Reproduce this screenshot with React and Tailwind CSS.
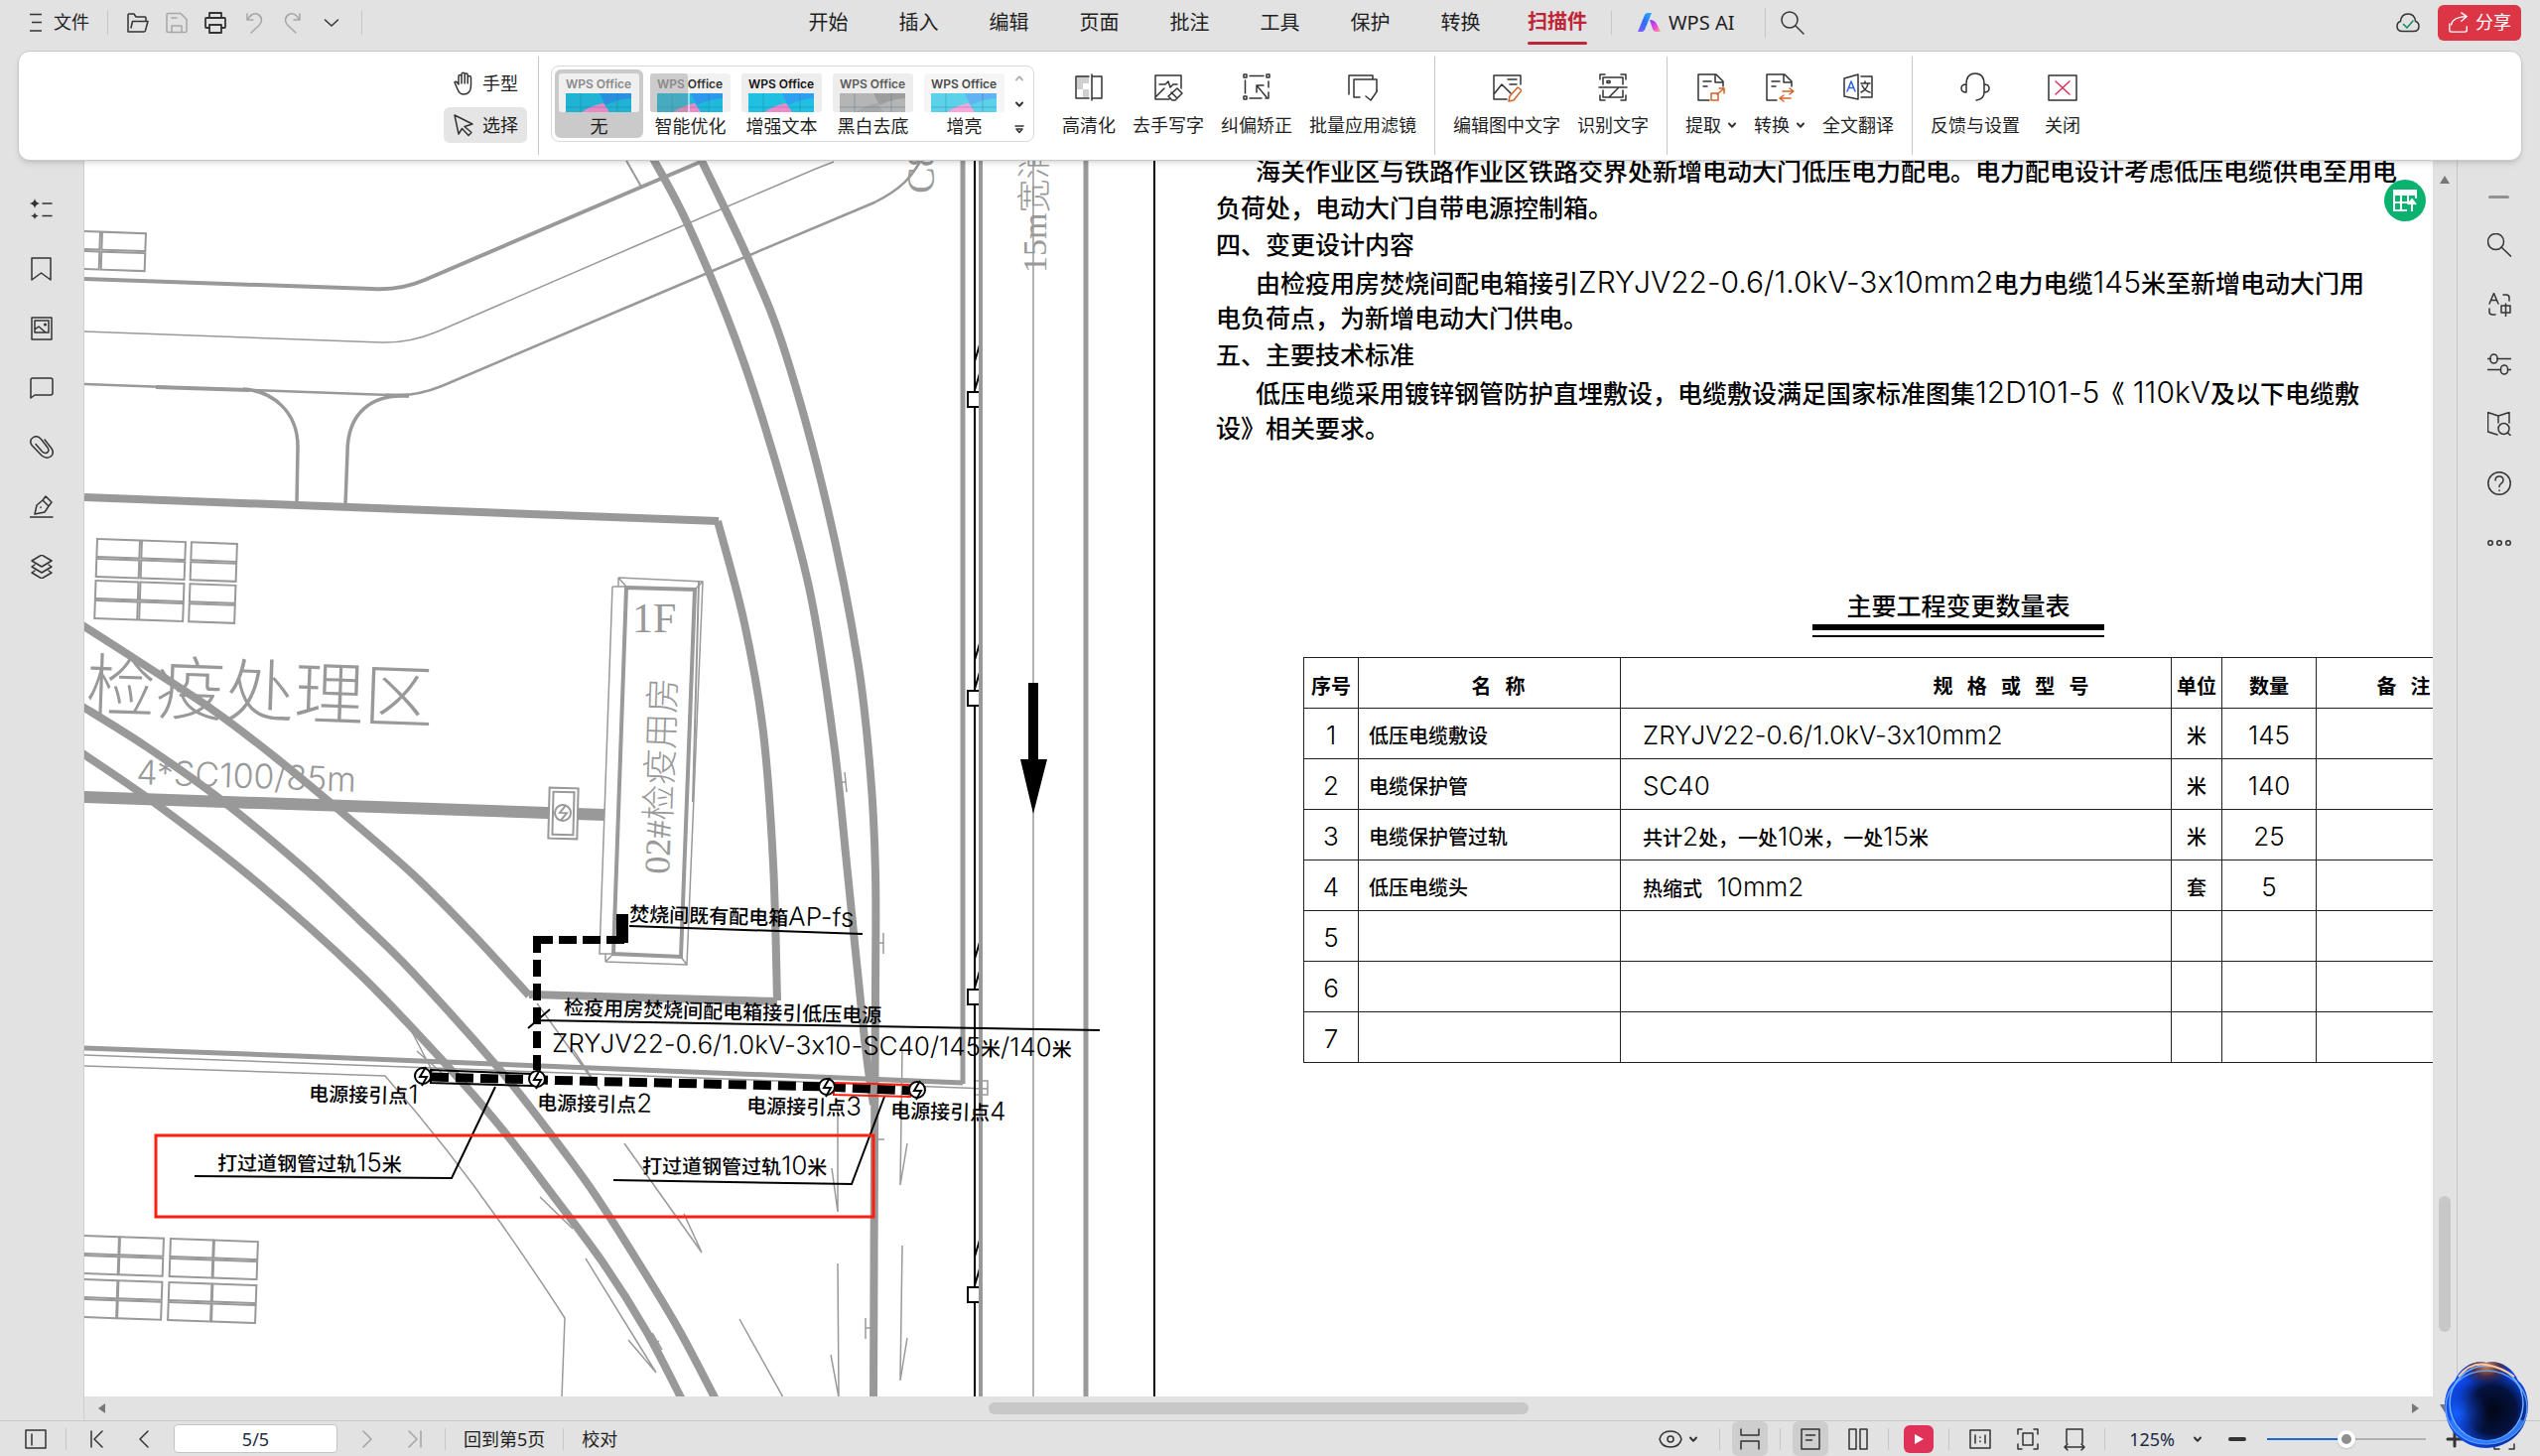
import React, { useState } from "react";

const tabs = ["开始", "插入", "编辑", "页面", "批注", "工具", "保护", "转换"];

const GREY = "#999999";

const Icon = ({ size = 24, box = 24, width = 1.5, color = "#333333", className = "", children }) => (
  <svg
    width={size}
    height={size}
    viewBox={`0 0 ${box} ${box}`}
    fill="none"
    stroke={color}
    strokeWidth={width}
    strokeLinecap="round"
    strokeLinejoin="round"
    className={`shrink-0 ${className}`}
    aria-hidden="true">
    {children}
  </svg>
);

const SmallChevron = ({ color = "#333333" }) => (
  <Icon size={10} box={10} width={2} color={color}>
    <path d="M2 3.5 5 6.8 8 3.5" />
  </Icon>
);

const Divider = ({ className = "" }) => <div className={`w-px shrink-0 bg-[#c6c6c6] ${className}`} />;

const SearchIcon = () => (
  <Icon>
    <circle cx="9" cy="9" r="8" />
    <path d="m15 15 8 8" />
  </Icon>
);

/* ---------- title bar ---------- */

const TopBar = ({ tab, setTab }) => (
  <header className="flex h-[51px] shrink-0 items-start">
    <div className="flex h-[45px] w-[789px] shrink-0 items-center pl-[24px]">
      <button type="button" className="flex items-center gap-[6px] text-[18px]">
        <Icon>
          <path d="M6 3.5h12M8 11.5h10M6 20h12" strokeLinecap="butt" />
        </Icon>
        文件
      </button>
      <Divider className="ml-[18px] h-[25px]" />
      <button type="button" aria-label="打开" className="ml-[18px]">
        <Icon>
          <path d="M2 21V4q0-1 1-1h5l2 3h9q1 0 1 1v3M2 21h16q1 0 1.400-1L22 10.500H6.500L5 17" />
        </Icon>
      </button>
      <button type="button" aria-label="保存" className="ml-[15px]">
        <Icon color="#a6a6a6">
          <path d="M2 21V4q0-1.500 1.500-1.500H16l6 6V20q0 1.500-1.500 1.500h-17Q2 21.500 2 20M7 21v-6h10v6M7 7h5" />
        </Icon>
      </button>
      <button type="button" aria-label="打印" className="ml-[15px]">
        <Icon width={1.8}>
          <path d="M6 7V2h12v5M6 17H3q-1 0-1-1V8q0-1 1-1h18q1 0 1 1v8q0 1-1 1h-3" />
          <path d="M6 14h12v8H6z" />
        </Icon>
      </button>
      <button type="button" aria-label="撤销" className="ml-[15px]">
        <Icon color="#a6a6a6">
          <path d="M5 3v6h6M5.500 8.500C9 3 13 2 16 3.500c5 3 4 8 1 11L9 22" />
        </Icon>
      </button>
      <button type="button" aria-label="重做" className="ml-[15px]">
        <Icon color="#a6a6a6">
          <path d="M19 3v6h-6M18.500 8.500C15 3 11 2 8 3.500c-5 3-4 8-1 11L15 22" />
        </Icon>
      </button>
      <button type="button" aria-label="更多" className="ml-[15px]">
        <Icon>
          <path d="m5.500 9 6.500 6 6.500-6" />
        </Icon>
      </button>
      <Divider className="ml-[18px] h-[25px]" />
    </div>

    <nav className="flex h-[45px] items-center text-[20px]">
      {tabs.map((name) => (
        <button key={name} type="button" className="w-[91px] shrink-0 text-center" onClick={() => setTab(name)}>
          {name}
        </button>
      ))}
      <button
        type="button"
        onClick={() => setTab("扫描件")}
        className="ml-[22px] flex h-[45px] shrink-0 flex-col justify-between font-bold text-[#bf2536]">
        <span className="pt-[7px]">扫描件</span>
        <span className={`h-[3px] w-full rounded-full ${tab === "扫描件" ? "bg-[#bf2536]" : ""}`} />
      </button>
      <Divider className="ml-[24px] h-[24px]" />
      <button type="button" className="ml-[25px] flex items-center gap-[8px] whitespace-nowrap">
        <svg width="24" height="20" viewBox="0 0 24 20" aria-hidden="true">
          <defs>
            <linearGradient id="aiBlue" x1="0" y1="1" x2="1" y2="0">
              <stop offset="0" stopColor="#8b5cff" />
              <stop offset="0.5" stopColor="#2f6bff" />
              <stop offset="1" stopColor="#21b7ff" />
            </linearGradient>
            <linearGradient id="aiPink" x1="0" y1="0" x2="1" y2="1">
              <stop offset="0" stopColor="#7a3cff" />
              <stop offset="0.6" stopColor="#f04bd8" />
              <stop offset="1" stopColor="#ffb27a" />
            </linearGradient>
          </defs>
          <path d="M8 2q1-2 3-2h4L8 17q-1 2-3 2H1z" fill="url(#aiBlue)" />
          <path d="M13 7q5 0 7 4l4 8h-4q-3 0-4-3z" fill="url(#aiPink)" />
        </svg>
        WPS AI
      </button>
      <Divider className="ml-[31px] h-[30px]" />
      <button type="button" aria-label="搜索" className="ml-[15px]">
        <SearchIcon />
      </button>
    </nav>

    <div className="ml-auto flex h-[45px] items-center gap-[18px] pr-[19px]">
      <button type="button" aria-label="已同步">
        <Icon>
          <path d="M6.500 20.500C2.500 20.500 1 18 1 15.500c0-3 1.500-4.500 3.500-5C5 5.500 8 3 12 3s7 2.500 7.500 7.500c2 .5 3.500 2 3.500 5 0 2.500-1.500 5-5.500 5z" />
          <path d="m7.500 13.500 3.500 3.500 6-7" stroke="#128a5b" />
        </Icon>
      </button>
      <button
        type="button"
        className="flex h-[36px] w-[84px] items-center justify-center gap-[6px] rounded-md bg-[#dc3545] text-[18px] text-white">
        <Icon size={22} color="#ffffff">
          <path d="M2 13v7q0 2 2 2h15q2 0 2-2v-4M4 14q1-8 16-9M15 1l6 4-6 5" />
        </Icon>
        分享
      </button>
    </div>
  </header>
);

/* ---------- ribbon ---------- */

const filters = [
  { name: "无", ink: "#8a8a8a", bg: "#efefef", base: "#1fb3d4", wedge: "#2b8fe0", pink: "#e889c4" },
  { name: "智能优化", ink: "#333333", bg: "#f1f1f1", base: "#1fb9dc", wedge: "#2f97ec", pink: "#ee8ac9", half: true },
  { name: "增强文本", ink: "#111111", bg: "#ededed", base: "#1fc0e2", wedge: "#2f9ff0", pink: "#f08acb" },
  { name: "黑白去底", ink: "#5a5a5a", bg: "#ededed", base: "#b5b5b5", wedge: "#9d9d9d", pink: "#a8a8a8" },
  { name: "增亮", ink: "#4a4a4a", bg: "#f5f5f5", base: "#5cd1ea", wedge: "#62b2f4", pink: "#fba6dc" },
];

const Thumb = ({ ink, bg, base, wedge, pink, half }) => (
  <svg width="81" height="39" viewBox="0 0 81 39" aria-hidden="true">
    <rect width="81" height="39" rx="3" fill={bg} />
    {half && <rect width="38" height="39" rx="3" fill="#cccccc" />}
    <text x="7" y="15" fontSize="12" fontWeight="600" fontFamily="Inter, sans-serif" fill={ink}>
      {half ?
        <>
          <tspan fill="#8a8a8a">WPS </tspan>Office
        </>
      : "WPS Office"}
    </text>
    <rect x="7" y="20" width="66" height="19" fill={base} />
    <path d="M41 20h32v5q-14 1-26 7z" fill={wedge} />
    <path d="M23 39q10-7 22-9l6 9z" fill={pink} />
    <path d="M7 34h66M22 20v19M59 20v19" stroke="#2b6f84" strokeOpacity="0.35" />
    {half && <path d="M7 20h31v19H7z" fill="#8f8f8f" fillOpacity="0.35" />}
    {half && <path d="M39 20v19" stroke="#ffffff" />}
  </svg>
);

const toolGroups = [
  [
    {
      name: "高清化",
      art: (
        <>
          <path d="M3 3h12v8H9v6H3zM9 17h6v8H9z" fill="#cfcfcf" stroke="none" />
          <path d="M15 4H2v22h13M18 4h10v22H18M18 2v26" />
        </>
      ),
    },
    {
      name: "去手写字",
      art: (
        <path d="M16 27H2V3h26v13M6 12h6l3-3 2 6 3-3h4M2 25l9-9M24 16l5 5-7 7h-3l-4-4zM18 20l6 6" />
      ),
    },
    {
      name: "纠偏矫正",
      art: (
        <>
          <path d="M2 2h3v3H2zM25 2h3v3h-3zM2 24h3v3H2zM8 3.500h14M3.500 8v13M8 26h12M27 9v6M27 20v6h-3" />
          <path d="M15 13l10 12M15 20v-7h7" />
        </>
      ),
    },
    {
      name: "批量应用滤镜",
      art: <path d="M1 22V3h24v3M12 25H6V7h23v12M18 24l5 4 7-10" />,
    },
  ],
  [
    {
      name: "编辑图中文字",
      art: (
        <>
          <path d="M15 27H2V3h27v9M16 7h9M18 12h7M2 22l8-10 9 9" />
          <path d="M26 15l4 3-8 10-5 1 1-5z" stroke="#d4642a" />
        </>
      ),
    },
    {
      name: "识别文字",
      art: (
        <path d="M2 7V2h5M23 2h5v5M2 23v5h5M23 28h5v-5M1 15h28M5 12V5h20v7M5 18v7h20v-7M20 16l-9 9M9 8.500h3v2H9z" />
      ),
    },
  ],
  [
    {
      name: "提取",
      menu: true,
      art: (
        <>
          <path d="M13 28H2V2h18l7 7v5M19 2v8h8M7 9h8M7 14h4" />
          <path d="M15 21h7v7h-7zM21 22l7-6M23 16h5v5" stroke="#d4642a" />
        </>
      ),
    },
    {
      name: "转换",
      menu: true,
      art: (
        <>
          <path d="M12 28H2V2h18l7 7v5M19 2v8h8M7 9h8M7 14h4" />
          <path d="M18 19h11l-4-3M29 19l-4 3M26 26H15l4-3M15 26l4 3" stroke="#d4642a" />
        </>
      ),
    },
    {
      name: "全文翻译",
      art: (
        <>
          <path d="M1 6 15 2v25L1 24zM18 4h11v21H18" />
          <path d="M4 19 8 9l4 10M5.500 15.500h5" stroke="#2f62e0" />
          <path d="M18 11h9M22 9v2M25 11q-1 6-7 9M19 13q3 6 8 7" />
        </>
      ),
    },
  ],
  [
    {
      name: "反馈与设置",
      art: (
        <path d="M6 12v8q-5 0-5-4t5-4q0-11 9-11t9 11v8q5 0 5-4t-5-4M24 20q0 7-8 8" />
      ),
    },
    {
      name: "关闭",
      art: (
        <>
          <path d="M1 3h28v25H1z" />
          <path d="m8 9 14 13M22 9 8 22" stroke="#d8325a" />
        </>
      ),
    },
  ],
];

const Ribbon = () => {
  const [filter, setFilter] = useState("无");
  return (
    <section className="relative z-10 mx-[18px] flex h-[111px] shrink-0 rounded-xl border border-[#c9c9c9] bg-white pl-[428px] text-[18px] leading-[24px] shadow-md">
      <div className="flex w-[84px] shrink-0 flex-col gap-[6px] pt-[13px]">
        <button type="button" className="flex h-[37px] items-center gap-[6px] rounded-md pl-[9px]">
          <Icon>
            <path d="M6 13V5q0-1.500 1.500-1.500T9 5v7-9q0-1.800 1.600-1.800T12.200 3v9V3.500q0-1.500 1.500-1.500t1.500 1.500V12 6q0-1.500 1.600-1.500T18.500 6v8q0 9-7.500 9-4 0-6-5L2 11q1.500-2 4 2z" />
          </Icon>
          手型
        </button>
        <button type="button" className="flex h-[36px] items-center gap-[6px] rounded-md bg-[#e5e5e5] pl-[9px]">
          <Icon>
            <path d="m2 2 18 9-8 2.500 7 6-3 3-6.500-7L6 21z" />
          </Icon>
          选择
        </button>
      </div>
      <Divider className="ml-[11px] mt-[5px] h-[99px]" />

      <div className="ml-[12px] mt-[14px] flex h-[77px] shrink-0 rounded-lg border border-[#d9d9d9] p-[3px]">
        <div className="flex gap-[3px]">
          {filters.map((f) => (
            <button
              key={f.name}
              type="button"
              onClick={() => setFilter(f.name)}
              className={`flex h-[69px] w-[89px] flex-col items-center rounded-md pt-[4px] ${filter === f.name ? "bg-[#cacaca]" : ""}`}>
              <Thumb {...f} />
              <span className="mt-[2px]">{f.name}</span>
            </button>
          ))}
        </div>
        <div className="flex w-[22px] flex-col items-center justify-between py-[4px]">
          <button type="button" aria-label="上一行">
            <Icon size={10} box={10} width={2} color="#b5b5b5">
              <path d="M2 6.500 5 3.200 8 6.500" />
            </Icon>
          </button>
          <button type="button" aria-label="下一行">
            <SmallChevron />
          </button>
          <button type="button" aria-label="展开">
            <Icon size={10} box={10} width={1.5}>
              <path d="M1 2h8M2 5l3 3.500L8 5z" />
            </Icon>
          </button>
        </div>
      </div>

      <div className="ml-[28px] flex gap-[17px] pt-[21px]">
        {toolGroups.map((group, i) => (
          <React.Fragment key={group[0].name}>
            {i > 0 && <Divider className="mx-px -mt-[16px] h-[99px]" />}
            {group.map((tool) => (
              <button
                key={tool.name}
                type="button"
                className="flex h-[66px] shrink-0 flex-col items-center gap-[11px] whitespace-nowrap last:ml-2">
                <Icon size={30} box={30}>
                  {tool.art}
                </Icon>
                <span className="flex items-center gap-[6px]">
                  {tool.name}
                  {tool.menu && <SmallChevron />}
                </span>
              </button>
            ))}
          </React.Fragment>
        ))}
      </div>
    </section>
  );
};

/* ---------- side bars ---------- */

const leftTools = [
  {
    name: "智能目录",
    art: (
      <>
        <path d="M5 1q.6 4 5 5-4.400 1-5 5-.6-4-5-5 4.400-1 5-5zM5 15q.5 3 4 3.500Q5.500 19 5 22q-.5-3-4-3.500Q4.500 18 5 15z" fill="#333333" stroke="none" />
        <path d="M13 6h9M13 18.500h9" />
      </>
    ),
  },
  { name: "书签", art: <path d="M2 1h19v22l-9.500-7L2 23z" /> },
  {
    name: "缩略图",
    art: (
      <>
        <path d="M2 1h20v22H2z" />
        <path d="M5 4h14v12H5zM5 13l4-3 7 6" />
        <circle cx="15.500" cy="8" r="0.800" />
      </>
    ),
  },
  { name: "批注", art: <path d="M3 2h18q2 0 2 2v13q0 2-2 2H5l-4 3V4q0-2 2-2z" /> },
  {
    name: "附件",
    art: <path d="m15 4 7 9q3 5-1 8t-9-1L2 9.500Q-1 5 3 2t8 1l7 9q2 3.500-.5 5t-5-1L6 8.500" />,
  },
  {
    name: "签名",
    art: <path d="M0 22h23M5 19l2-9 6-5 6 6-4 6zM13 5l3-4 6 6-3 4M11 12v.5" />,
  },
  {
    name: "图层",
    art: <path d="m12 0 10 6-10 6L2 6zM5 10l-3 2 10 6 10-6-3-2M5 16l-3 2 10 6 10-6-3-2" />,
  },
];

const rightTools = [
  {
    name: "查找",
    art: (
      <>
        <circle cx="8.500" cy="8.500" r="8" />
        <path d="m14 14 10 9.500" />
      </>
    ),
  },
  {
    name: "翻译",
    art: <path d="M2 11 6.500.500 11 11M3.500 7.500h6M16 2h3q3 0 3 3v3M2 16v3q0 3 3 3h3M14 13h9v7h-9zM18.500 11v13" />,
  },
  {
    name: "调整",
    art: (
      <>
        <path d="M0 6.500h3M10 6.500h14M0 17.500h13M21 17.500h3" />
        <rect x="3" y="2" width="7" height="9" rx="3.500" />
        <rect x="13.500" y="13" width="7" height="9" rx="3.500" />
      </>
    ),
  },
  {
    name: "查阅",
    art: (
      <>
        <path d="M10 23 .500 20V.500L11 4l11-3.500V11M11 4v7" />
        <circle cx="16.500" cy="17" r="5.500" />
        <path d="m20.500 21 3 3" />
      </>
    ),
  },
  {
    name: "帮助",
    art: (
      <>
        <circle cx="12" cy="12" r="11.200" />
        <path d="M8 9q0-4 4-4t4 4q0 2-2.500 3.500-1.500 1-1.500 3M12 19v.5" />
      </>
    ),
  },
  {
    name: "更多",
    art: (
      <>
        <circle cx="3" cy="12" r="2.300" />
        <circle cx="12" cy="12" r="2.300" />
        <circle cx="21" cy="12" r="2.300" />
      </>
    ),
  },
];

const SideButtons = ({ tools }) =>
  tools.map((tool) => (
    <button key={tool.name} type="button" aria-label={tool.name} className="flex h-[60px] items-center justify-center">
      <Icon>{tool.art}</Icon>
    </button>
  ));

/* ---------- site plan ---------- */

// Catmull-Rom through the points, as one path
const smooth = (pts) => {
  let d = `M${pts[0][0]} ${pts[0][1]}`;
  for (let i = 0; i < pts.length - 1; i++) {
    const p0 = pts[i - 1] || pts[i];
    const p1 = pts[i];
    const p2 = pts[i + 1];
    const p3 = pts[i + 2] || p2;
    d += ` C${p1[0] + (p2[0] - p0[0]) / 6} ${p1[1] + (p2[1] - p0[1]) / 6} ${p2[0] - (p3[0] - p1[0]) / 6} ${p2[1] - (p3[1] - p1[1]) / 6} ${p2[0]} ${p2[1]}`;
  }
  return d;
};

const rails = [
  [[80, 628], [147, 671], [214, 715], [276, 762], [339, 814], [415, 880], [476, 941], [533, 1003]],
  [[80, 710], [147, 752], [223, 806], [303, 872], [362, 927], [415, 979], [503, 1077], [552, 1139], [597, 1200], [640, 1267], [683, 1338], [721, 1410]],
  [[80, 757], [160, 812], [259, 889], [361, 980], [448, 1071], [503, 1134], [553, 1199], [608, 1273], [651, 1341], [687, 1410]],
  [[657, 158], [692, 224], [740, 339], [778, 454], [816, 596], [840, 748], [854, 880], [871, 1047], [880, 1113]],
  [[705, 158], [754, 261], [791, 355], [833, 509], [864, 665], [877, 780], [882, 880], [882, 1000], [881, 1160], [880, 1412]],
  [[723, 525], [750, 628], [769, 738], [779, 870], [783, 1008]],
];

const thinLines = [
  "M420 1059 445 1081M410 1030 436 1080M541 1011 604 1098M577 1057 597 1087",
  "M629 1152 707 1262 689 1223M544 1206 577 1238M590 1268 661 1383 633 1350",
  "M657 1343 667 1360M661 1354 664 1351M745 1329 789 1408M844 1273 845 1408 837 1365",
  "M909 1255 907 1391 914 1348M872 1328V1349M872 1338H880M844 1113V1221L838 1177",
  "M909 1058 907 1194 914 1152M890 940V961M883 950H890M880 1148H891M851 778 853 798M847 788H852",
];

const Cells = ({ x, y, cols, rows }) => (
  <g transform={`rotate(2 ${x} ${y})`} strokeWidth="2">
    {rows.map((ry) => cols.map(([cx, w]) => <rect key={`${cx}-${ry}`} x={cx} y={ry} width={w} height="18" />))}
  </g>
);

const Mixed = ({ children, size }) =>
  children.split(/([\x20-\x7e]+)/).map((part, i) =>
    i % 2 ?
      <tspan key={i} fontSize={size} fontWeight="300">
        {part}
      </tspan>
    : part
  );

const Label = ({ x, y, turn = 1.5, children }) => (
  <text x={x} y={y} transform={`rotate(${turn} ${x} ${y})`} fontSize="20" fontWeight="500" fill="#000000" stroke="none">
    <Mixed size={26}>{children}</Mixed>
  </text>
);

const Node = ({ x, y }) => (
  <g stroke="#000000" strokeWidth="2" fill="#ffffff">
    <circle cx={x} cy={y} r="8" />
    <path d={`M${x + 3} ${y - 9}l-6 10h7l-5 9`} fill="none" />
  </g>
);

const SitePlan = () => (
  <svg
    width="1077"
    height="1246"
    viewBox="85 162 1077 1246"
    className="shrink-0 [font-feature-settings:'calt'_0]"
    fill="none"
    stroke={GREY}
    fontFamily="Inter, 'Noto Sans CJK SC', sans-serif">
    {/* roads */}
    <path d="M85 281 375 291Q402 293 428 282L640 191 706 163" strokeWidth="4" />
    <path d="M85 334 384 345Q412 346 441 334L640 248 733 208 822 170 840 163" strokeWidth="1.500" />
    <path d="M85 387 392 398Q418 400 445 389L640 306 753 258 881 204C909 190 918 178 927 163" strokeWidth="2.500" />
    <path d="M157 390 251 393M388 398.500H412" strokeWidth="4" />
    <path d="M245 392C275 394 300 415 300 450L299 507M412 399C375 397 350 415 350 456L348 508" strokeWidth="3.500" />
    <path d="M630 160 646 188" strokeWidth="2" />
    <path d="M85 501 724 525" strokeWidth="8" />

    <Cells x={85} y={233} cols={[[60, 41], [103, 44]]} rows={[233, 253]} />
    <Cells x={98} y={543} cols={[[98, 43], [143, 44], [193, 46]]} rows={[543, 563, 585, 605]} />
    <Cells x={85} y={1245} cols={[[70, 50], [121, 44], [172, 43], [216, 44]]} rows={[1245, 1265, 1289, 1309]} />

    {/* rails */}
    <g strokeWidth="8">
      {rails.map((pts, i) => (
        <path key={i} d={smooth(pts)} />
      ))}
      <path d="M533 1002 783 1009" />
    </g>
    <path d="M84 803 609 821" strokeWidth="12" />

    {/* hand hole */}
    <g transform="rotate(1.500 567 819)">
      <rect x="553" y="794" width="29" height="51" fill="#ffffff" strokeWidth="2" />
      <rect x="557" y="798" width="21" height="43" strokeWidth="2" />
      <circle cx="567" cy="819" r="8" strokeWidth="2" />
      <path d="m570 811-6 8h7l-6 8" strokeWidth="2" />
    </g>

    {/* building */}
    <path d="M623 582 708 586 692 972 610 969M617 591 604 961H618M617 591H631M623 582 631 591M708 586 700 594M692 972 686 964M610 969 618 961M623 582V591M610 969V961" strokeWidth="1.500" />
    <path d="M704 586 698 808" strokeWidth="2" />
    <path d="M631 592 700 594 686 964 618 961Z" strokeWidth="4" />

    <g fill={GREY} stroke="none">
      <text x="637" y="637" fontSize="42" fontFamily="'Liberation Serif', serif">
        1F
      </text>
      <text x="674" y="881" transform="rotate(-88 674 881)" fontSize="36" fontWeight="300" fontFamily="'Liberation Serif', 'Noto Sans CJK SC', serif">
        02#检疫用房
      </text>
      <text x="86" y="716" transform="rotate(2 86 716)" fontSize="70" fontWeight="300">
        检疫处理区
      </text>
      <text x="137" y="790" transform="rotate(2 137 790)" fontSize="34" fontWeight="300">
        4*SC100/85m
      </text>
      <text x="1054" y="275" transform="rotate(-90 1054 275)" fontSize="34" fontWeight="300" fontFamily="'Liberation Serif', 'Noto Sans CJK SC', serif">
        15m宽消
      </text>
      <text x="941" y="195" transform="rotate(-90 941 195)" fontSize="40" fontFamily="'Liberation Serif', serif">
        C8
      </text>
    </g>

    {/* boundary */}
    <path d="M85 1056 300 1064 970 1091" strokeWidth="5" />
    <path d="M85 1063 300 1071 995 1097M982 1089h13v14h-13z" strokeWidth="1.500" />
    <path d="M85 1074 300 1081 388 1084C430 1132 475 1190 505 1233S555 1306 569 1328L566 1408" strokeWidth="1.500" />
    {thinLines.map((d) => (
      <path key={d} d={d} strokeWidth="1.500" />
    ))}
    <path d="M970 162V1092M1094 162V1408" strokeWidth="5" />
    <path d="M1041 162V1408" strokeWidth="1.500" />
    <path d="M982 162V1408" stroke="#000000" strokeWidth="2" />
    {[402, 703, 1004, 1304].map((y) => (
      <g key={y} stroke="#000000" strokeWidth="2">
        <path d={`M982 ${y - 9}l6-20M982 ${y - 38}l6-20`} />
        <rect x="975" y={y - 7} width="14" height="15" fill="#ffffff" />
      </g>
    ))}
    <path d="M988 162V1408" strokeWidth="4" />
    <path d="M1036 688h10v77h9l-14 55-13-55h8z" fill="#000000" stroke="none" />

    {/* cable run */}
    <g stroke="#000000">
      <path d="M627 921V950" strokeWidth="12" />
      <path d="M539 947H632" strokeWidth="8" strokeDasharray="18 6" />
      <path d="M541 943V1078" strokeWidth="8" strokeDasharray="17 7" />
      <path d="M434 1085 541 1088 833 1095 918 1099" strokeWidth="9" strokeDasharray="18 7" />
      <path d="M434 1078 536 1082V1094L434 1091ZM634 933 869 941M541 1028 1108 1038M554 1017 532 1036" strokeWidth="2" />
      <path d="M196 1185 455 1187 499 1095M618 1189 858 1193 891 1105" strokeWidth="2" />
    </g>
    <path d="M840 1091 917 1093V1105L840 1103Z" stroke="#ff1f10" strokeWidth="2" />
    <Node x={426} y={1084} />
    <Node x={541} y={1087} />
    <Node x={833} y={1095} />
    <Node x={924} y={1098} />

    <Label x={634} y={928}>焚烧间既有配电箱AP-fs</Label>
    <Label x={568} y={1022}>检疫用房焚烧间配电箱接引低压电源</Label>
    <Label x={556} y={1060} turn={0.5}>ZRYJV22-0.6/1.0kV-3x10-SC40/145米/140米</Label>
    <Label x={311} y={1109}>电源接引点1</Label>
    <Label x={541} y={1118}>电源接引点2</Label>
    <Label x={752} y={1121}>电源接引点3</Label>
    <Label x={897} y={1126}>电源接引点4</Label>
    <Label x={219} y={1179} turn={0.5}>打过道钢管过轨15米</Label>
    <Label x={647} y={1182} turn={0.5}>打过道钢管过轨10米</Label>
    <rect x="157" y="1144" width="723" height="82" stroke="#ff1f10" strokeWidth="3" />
  </svg>
);

/* ---------- written part of the sheet ---------- */

const notes = [
  { text: "海关作业区与铁路作业区铁路交界处新增电动大门低压电力配电。电力配电设计考虑低压电缆供电至用电", indent: true },
  { text: "负荷处，电动大门自带电源控制箱。" },
  { text: "四、变更设计内容" },
  { text: "由检疫用房焚烧间配电箱接引ZRYJV22-0.6/1.0kV-3x10mm2电力电缆145米至新增电动大门用", indent: true },
  { text: "电负荷点，为新增电动大门供电。" },
  { text: "五、主要技术标准" },
  { text: "低压电缆采用镀锌钢管防护直埋敷设，电缆敷设满足国家标准图集12D101-5《 110kV及以下电缆敷", indent: true },
  { text: "设》相关要求。" },
];

const quantities = [
  ["1", "低压电缆敷设", "ZRYJV22-0.6/1.0kV-3x10mm2", "米", "145"],
  ["2", "电缆保护管", "SC40", "米", "140"],
  ["3", "电缆保护管过轨", "共计2处，一处10米，一处15米", "米", "25"],
  ["4", "低压电缆头", "热缩式  10mm2", "套", "5"],
  ["5", "", "", "", ""],
  ["6", "", "", "", ""],
  ["7", "", "", "", ""],
];

const Cad = ({ children, latin }) =>
  children.split(/([\x20-\x7e]+)/).map((part, i) =>
    i % 2 ?
      <span key={i} className={`font-light ${latin}`}>
        {part}
      </span>
    : part
  );

const Sheet = () => (
  <article className="min-w-0 flex-1 overflow-hidden border-l-2 border-black font-['Inter','Noto_Sans_CJK_SC',sans-serif] font-medium text-black [font-feature-settings:'calt'_0]">
    <div className="-mt-[7px] whitespace-pre pl-[61px] text-[25px] leading-[37px]">
      {notes.map((n) => (
        <p key={n.text} className={`h-[37px] ${n.indent ? "pl-[40px]" : ""}`}>
          <Cad latin="text-[30px]">{n.text}</Cad>
        </p>
      ))}
    </div>

    <div className="ml-[662px] mt-[142px] w-[294px]">
      <h2 className="text-center text-[25px] font-medium leading-[36px]">主要工程变更数量表</h2>
      <div className="h-[6px] bg-black" />
      <div className="mt-[5px] h-[2px] bg-black" />
    </div>

    <table className="ml-[149px] mt-[20px] w-[1196px] table-fixed border-collapse text-[20px] leading-[28px] [&_td]:border [&_td]:border-[#222222] [&_td]:px-0 [&_td]:pb-0 [&_td]:pt-[6px] [&_th]:border [&_th]:border-[#222222] [&_th]:px-0 [&_th]:pb-0 [&_th]:pt-[8px] [&_th]:font-bold">
      <colgroup>
        <col className="w-[55px]" />
        <col className="w-[264px]" />
        <col className="w-[555px]" />
        <col className="w-[51px]" />
        <col className="w-[95px]" />
        <col className="w-[176px]" />
      </colgroup>
      <thead>
        <tr className="h-[51px] whitespace-pre">
          <th>序号</th>
          <th>
            <span className="pl-[18px]">名   称</span>
          </th>
          <th>
            <span className="pl-[232px]">规   格   或   型   号</span>
          </th>
          <th>单位</th>
          <th>数量</th>
          <th>备   注</th>
        </tr>
      </thead>
      <tbody>
        {quantities.map(([no, name, spec, unit, count]) => (
          <tr key={no} className="h-[51px] whitespace-pre">
            <td className="text-center">
              <Cad latin="text-[26px]">{no}</Cad>
            </td>
            <td>
              <span className="pl-[10px]">{name}</span>
            </td>
            <td>
              <span className="pl-[22px]">
                <Cad latin="text-[26px]">{spec}</Cad>
              </span>
            </td>
            <td className="text-center">{unit}</td>
            <td className="text-center">
              <Cad latin="text-[26px]">{count}</Cad>
            </td>
            <td />
          </tr>
        ))}
      </tbody>
    </table>
  </article>
);

/* ---------- status bar ---------- */

const StatusButton = ({ name, active, className = "", children }) => (
  <button
    type="button"
    aria-label={name}
    className={`flex h-[35px] w-[36px] shrink-0 items-center justify-center rounded-md ${active ? "bg-[#cecece]" : ""} ${className}`}>
    <Icon>{children}</Icon>
  </button>
);

const StatusBar = () => {
  const [zoom, setZoom] = useState(50);
  return (
    <footer className="flex h-[36px] shrink-0 items-center border-t border-[#c8c8c8] text-[18px] leading-[24px]">
      <StatusButton name="侧栏" className="ml-[18px]">
        <path d="M2 3h20v18H2zM8 7v11" />
      </StatusButton>
      <Divider className="ml-[12px] h-[22px]" />
      <StatusButton name="首页" className="ml-[12px]">
        <path d="M7 4v16M18 4l-8 8 8 8" />
      </StatusButton>
      <StatusButton name="上一页" className="ml-[12px]">
        <path d="m16 4-8 8 8 8" />
      </StatusButton>
      <input
        type="text"
        aria-label="页码"
        defaultValue="5/5"
        className="ml-[12px] h-[29px] w-[165px] rounded border border-[#c4c4c4] bg-white text-center text-[#1c2b45]"
      />
      <button type="button" aria-label="下一页" className="ml-[18px]">
        <Icon color="#a3a3a3">
          <path d="m8 4 8 8-8 8" />
        </Icon>
      </button>
      <button type="button" aria-label="末页" className="ml-[24px]">
        <Icon color="#a3a3a3">
          <path d="m6 4 8 8-8 8M18 4v16" />
        </Icon>
      </button>
      <Divider className="ml-[18px] h-[22px]" />
      <button type="button" className="ml-[18px]">回到第5页</button>
      <Divider className="ml-[18px] h-[22px]" />
      <button type="button" className="ml-[18px]">校对</button>

      <div className="ml-auto flex items-center pr-[24px]">
        <button type="button" aria-label="护眼" className="flex items-center gap-[6px]">
          <Icon>
            <path d="M1 12q2-8 11-8t11 8q-2 8-11 8T1 12z" />
            <circle cx="12" cy="12" r="3" />
          </Icon>
          <SmallChevron />
        </button>
        <Divider className="ml-[21px] h-[22px]" />
        <StatusButton name="连续阅读" active className="ml-[12px]">
          <path d="M3 2v6h18V2M3 22v-8h18v8" />
        </StatusButton>
        <Divider className="ml-[12px] h-[22px]" />
        <StatusButton name="单页" active className="ml-[12px]">
          <path d="M3 2h18v20H3zM7.500 8h9M7.500 13h6" />
        </StatusButton>
        <StatusButton name="双页" className="ml-[12px]">
          <path d="M3 2h7v20H3zM14 2h7v20h-7z" />
        </StatusButton>
        <Divider className="ml-[12px] h-[22px]" />
        <button
          type="button"
          aria-label="播放"
          className="ml-[15px] flex h-[28px] w-[30px] items-center justify-center rounded-md bg-[#e03159]">
          <svg width="12" height="12" viewBox="0 0 12 12" aria-hidden="true">
            <path d="M2 1l9 5-9 5z" fill="#ffffff" />
          </svg>
        </button>
        <Divider className="ml-[15px] h-[22px]" />
        <StatusButton name="实际大小" className="ml-[13px]">
          <path d="M2 3h20v18H2zM7 8v8M17 8v8M12 10v.5M12 14v.5" />
        </StatusButton>
        <StatusButton name="适合页面" className="ml-[12px]">
          <path d="M2 7V2h4M18 2h4v5M2 17v5h4M18 22h4v-5M7 6h10v12H7z" />
        </StatusButton>
        <StatusButton name="适合宽度" className="ml-[11px]">
          <path d="M4 16V2h16v14M2 20h20M5 17l-3 3 3 3M19 17l3 3-3 3" />
        </StatusButton>
        <Divider className="ml-[12px] h-[22px]" />
        <button type="button" className="ml-[24px] flex items-center gap-[18px] text-[#1c2b45]">
          125%
          <SmallChevron />
        </button>
        <button type="button" aria-label="缩小" className="ml-[26px]">
          <Icon size={18} box={18} width={4}>
            <path d="M2 9h14" />
          </Icon>
        </button>
        <input
          type="range"
          aria-label="缩放"
          value={zoom}
          onChange={(e) => setZoom(e.target.value)}
          className="ml-[21px] h-[18px] w-[160px] appearance-none bg-transparent bg-[linear-gradient(to_right,#1f66d6_50%,#b0b0b0_50%)] bg-[length:100%_2px] bg-center bg-no-repeat [&::-webkit-slider-thumb]:h-[18px] [&::-webkit-slider-thumb]:w-[18px] [&::-webkit-slider-thumb]:appearance-none [&::-webkit-slider-thumb]:rounded-full [&::-webkit-slider-thumb]:border-4 [&::-webkit-slider-thumb]:border-white [&::-webkit-slider-thumb]:bg-[#8f8f8f] [&::-webkit-slider-thumb]:shadow"
        />
        <button type="button" aria-label="放大" className="ml-[20px]">
          <Icon size={18} box={18} width={3}>
            <path d="M2 9h14M9 2v14" />
          </Icon>
        </button>
        <button type="button" aria-label="全屏" className="ml-[29px]">
          <Icon>
            <path d="M2 7V2h5M17 2h5v5M2 17v5h5M17 22h5v-5" />
          </Icon>
        </button>
      </div>
    </footer>
  );
};

const Orb = () => (
  <svg width="92" height="92" viewBox="0 0 92 92" aria-hidden="true">
    <defs>
      <radialGradient id="orbCore" cx="0.580" cy="0.560" r="0.560">
        <stop offset="0" stopColor="#020616" />
        <stop offset="0.500" stopColor="#04123f" />
        <stop offset="0.780" stopColor="#0a3fd0" />
        <stop offset="1" stopColor="#1250ff" />
      </radialGradient>
      <radialGradient id="orbGlow" cx="0.500" cy="0.080" r="0.420">
        <stop offset="0" stopColor="#e08a4c" />
        <stop offset="0.500" stopColor="#5a2c28" stopOpacity="0.800" />
        <stop offset="1" stopColor="#1a1030" stopOpacity="0" />
      </radialGradient>
      <radialGradient id="orbLeft" cx="0.140" cy="0.600" r="0.380">
        <stop offset="0" stopColor="#1460ff" />
        <stop offset="1" stopColor="#0b2fb0" stopOpacity="0" />
      </radialGradient>
    </defs>
    <path d="M46 4C58 1 72 8 78 22c10 8 12 26 8 38C82 78 64 90 46 90S10 78 6 60C2 48 4 30 14 22 20 8 34 1 46 4z" fill="url(#orbCore)" />
    <circle cx="46" cy="47" r="42" fill="url(#orbLeft)" />
    <path d="M46 4C58 1 72 8 78 22q4 30-32 30T14 22C20 8 34 1 46 4z" fill="url(#orbGlow)" />
    <g fill="none" stroke="#6fb0ff" strokeWidth="1.500">
      <ellipse cx="46" cy="45" rx="37" ry="38" />
      <ellipse cx="46" cy="49" rx="41" ry="37" strokeOpacity="0.800" />
      <path d="M10 62q12 22 36 22t36-22" stroke="#2d7bff" strokeWidth="3" />
    </g>
    <path d="M18 18Q30 3 46 6t28 12" fill="none" stroke="#ffc9a0" strokeWidth="2" />
  </svg>
);

const App = () => {
  const [tab, setTab] = useState("扫描件");

  return (
    <div className="relative flex h-screen flex-col overflow-hidden bg-[#e2e2e2] font-['Noto_Sans','Noto_Sans_CJK_SC',sans-serif] text-[#1f1f1f]">
      <TopBar tab={tab} setTab={setTab} />
      <Ribbon />

      <div className="flex min-h-0 flex-1">
        <aside className="flex w-[85px] shrink-0 flex-col border-r border-[#cfcfcf] pt-[19px]">
          <SideButtons tools={leftTools} />
        </aside>

        <main className="flex min-w-0 flex-1 flex-col">
          <div className="relative flex min-h-0 flex-1 overflow-hidden bg-white">
            <SitePlan />
            <Sheet />
            <button
              type="button"
              aria-label="提取表格"
              className="absolute right-[7px] top-[19px] flex h-[42px] w-[42px] items-center justify-center rounded-full bg-[#0bb26f]">
              <svg width="26" height="24" viewBox="0 0 26 24" fill="none" stroke="#ffffff" strokeWidth="2" aria-hidden="true">
                <path d="M2 2h22v4H2z" fill="#ffffff" />
                <path d="M24 4v6M2 6v16h13M2 14h14M9 6v16M16 6v8M20 23V12" />
                <path d="m16 16 4-5 4 5" fill="#ffffff" />
              </svg>
            </button>
          </div>
          <div className="flex h-[24px] shrink-0 items-center justify-between px-[14px]">
            <svg width="8" height="10" viewBox="0 0 8 10" aria-hidden="true">
              <path d="M7 0v10L0 5z" fill="#777777" />
            </svg>
            <div className="h-[12px] w-[544px] rounded-full bg-[#c8c8c8]" />
            <svg width="8" height="10" viewBox="0 0 8 10" aria-hidden="true">
              <path d="M1 0v10l7-5z" fill="#777777" />
            </svg>
          </div>
        </main>

        <div className="flex w-[25px] shrink-0 flex-col items-center border-r border-[#c8c8c8] pb-[8px] pt-[15px]">
          <svg width="10" height="8" viewBox="0 0 10 8" aria-hidden="true">
            <path d="M5 0l5 8H0z" fill="#777777" />
          </svg>
          <div className="mb-[73px] mt-auto h-[137px] w-[12px] rounded-full bg-[#c8c8c8]" />
          <svg width="10" height="8" viewBox="0 0 10 8" aria-hidden="true">
            <path d="M5 8l5-8H0z" fill="#777777" />
          </svg>
        </div>

        <aside className="flex w-[83px] shrink-0 flex-col pt-[35px]">
          <div className="mx-auto mb-[17px] h-[3px] w-[21px] rounded-full bg-[#929292]" />
          <SideButtons tools={rightTools} />
        </aside>
      </div>

      <StatusBar />
      <div className="absolute bottom-[6px] right-[8px]">
        <Orb />
      </div>
    </div>
  );
};

export default App;
